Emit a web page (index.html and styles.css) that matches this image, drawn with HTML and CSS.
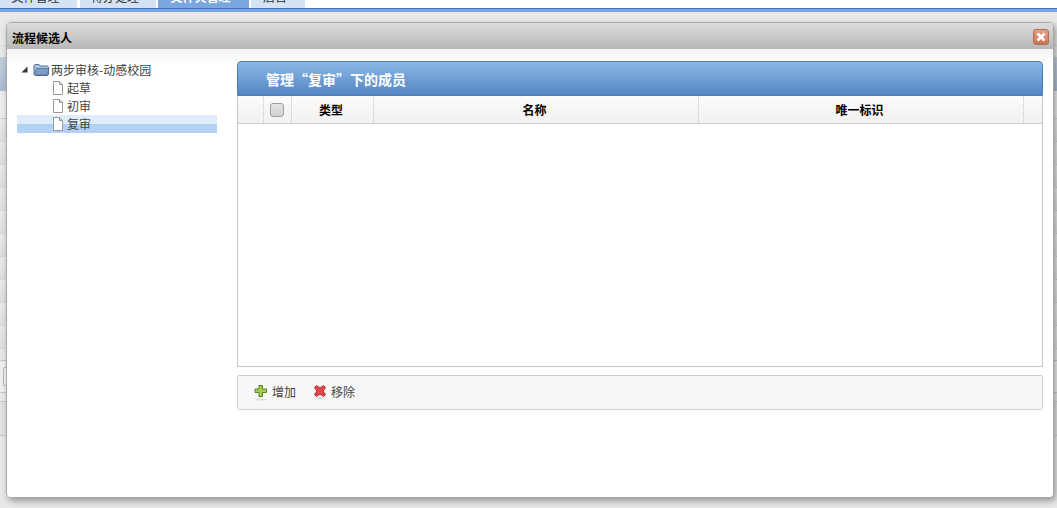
FILE: index.html
```html
<!DOCTYPE html>
<html lang="zh-CN">
<head>
    <meta charset="UTF-8">
    <title>流程候选人</title>
    <link rel="stylesheet" href="styles.css">
</head>
<body>
    <!-- page behind the dialog -->
    <div class="tabs">
        <div class="tab tab-1">文件管理</div>
        <div class="tab tab-2">待办处理</div>
        <div class="tab tab-3">文件夹管理</div>
        <div class="tab tab-4">后台</div>
    </div>
    <div class="tabs-line"></div>
    <div class="back">
        <div class="back-head"></div>
        <div class="back-blue"></div>
        <div class="back-first"></div>
        <div class="back-row"></div>
        <div class="back-row"></div>
        <div class="back-row"></div>
        <div class="back-row"></div>
        <div class="back-row"></div>
        <div class="back-row"></div>
        <div class="back-row"></div>
        <div class="back-row"></div>
        <div class="back-row"></div>
        <div class="back-row"></div>
        <div class="back-last"></div>
        <div class="back-pager"><span class="back-box"></span></div>
        <div class="back-gap"></div>
        <div class="back-foot"></div>
    </div>

    <!-- dialog -->
    <div class="dialog">
        <div class="dialog-title">
            <span>流程候选人</span>
            <span class="close">
                <svg width="10" height="10" viewBox="0 0 10 10"><path d="M1.5 1.5L8.5 8.5M8.5 1.5L1.5 8.5" stroke="#fff" stroke-width="2.6"/></svg>
            </span>
        </div>
        <div class="dialog-body">
            <div class="tree">
                <div class="tree-row tree-root">
                    <svg class="arrow" width="7" height="7" viewBox="0 0 7 7"><path d="M6.5 0.5V6.5H0.5Z" fill="#333"/></svg>
                    <svg class="folder" width="17" height="13" viewBox="0 0 17 13">
                        <path d="M1 11V3C1 2 1.6 1.5 2.5 1.5H6L7.5 3H14C15 3 15.5 3.6 15.5 4.5V11C15.5 11.8 15 12.5 14 12.5H2.5C1.6 12.5 1 11.8 1 11Z" fill="#a9c3e0" stroke="#4d6f96"/>
                        <path d="M1.5 11.5L3.5 5.5H16L14 12H2.5Z" fill="#7c9dc6" stroke="#4d6f96" stroke-width="0.8"/>
                    </svg>
                    <span>两步审核-动感校园</span>
                </div>
                <div class="tree-row tree-leaf">
                    <svg class="page" width="12" height="14" viewBox="0 0 12 14"><path d="M1.5 0.5H7.5L10.5 3.5V13.5H1.5Z M7.5 0.5V3.5H10.5" fill="#fff" stroke="#999"/></svg>
                    <span>起草</span>
                </div>
                <div class="tree-row tree-leaf">
                    <svg class="page" width="12" height="14" viewBox="0 0 12 14"><path d="M1.5 0.5H7.5L10.5 3.5V13.5H1.5Z M7.5 0.5V3.5H10.5" fill="#fff" stroke="#999"/></svg>
                    <span>初审</span>
                </div>
                <div class="tree-row tree-leaf selected">
                    <svg class="page" width="12" height="14" viewBox="0 0 12 14"><path d="M1.5 0.5H7.5L10.5 3.5V13.5H1.5Z M7.5 0.5V3.5H10.5" fill="#fff" stroke="#999"/></svg>
                    <span>复审</span>
                </div>
            </div>

            <div class="panel">
                <div class="panel-head">管理“复审”下的成员</div>
                <div class="grid">
                    <div class="grid-head">
                        <div class="cell"></div>
                        <div class="cell"><span class="check"></span></div>
                        <div class="cell cell-text">类型</div>
                        <div class="cell cell-text">名称</div>
                        <div class="cell cell-text">唯一标识</div>
                        <div class="cell cell-last"></div>
                    </div>
                </div>
                <div class="toolbar">
                    <div class="tool">
                        <svg width="14" height="17" viewBox="0 0 14 17">
                            <ellipse cx="7" cy="15.5" rx="6" ry="1" fill="#ddd"/>
                            <path d="M5 1.5H8.5V5H12.5V8.5H8.5V12.5H5V8.5H1V5H5Z" fill="#a5cc4f" stroke="#57812a"/>
                        </svg>
                        <span>增加</span>
                    </div>
                    <div class="tool">
                        <svg width="14" height="17" viewBox="0 0 14 17">
                            <ellipse cx="7" cy="14.5" rx="5" ry="1" fill="#ddd"/>
                            <path d="M1.5 3.5L3.5 1.5L7 4L10.5 1.5L12.5 3.5L10 7L12.5 10.5L10.5 12.5L7 10L3.5 12.5L1.5 10.5L4 7Z" fill="#e2474b" stroke="#a32a2e"/>
                        </svg>
                        <span>移除</span>
                    </div>
                </div>
            </div>
        </div>
    </div>
</body>
</html>
```

FILE: styles.css
```css
* {
    box-sizing: border-box;
}
html, body {
    height: 100%;
}
body {
    margin: 0;
    overflow: hidden;
    background-color: #e8e8e8;
    font-family: "Noto Sans CJK SC", "Liberation Sans", sans-serif;
    font-size: 12px;
}

/* tabs cut off by the top of the window */
.tabs {
    display: flex;
    align-items: flex-end;
    height: 8px;
    overflow: hidden;
    background-color: #fff;
}
.tab {
    flex: none;
    height: 24px;
    margin-right: 3px;
    padding-right: 6px;
    background-color: #d3e3f5;
    color: #333;
    line-height: 26px;
    text-align: center;
}
.tab-1 {
    width: 77px;
}
.tab-2 {
    width: 76px;
    margin-right: 2px;
}
.tab-3 {
    width: 91px;
    margin-right: 2px;
    background-color: #7ba6e0;
    color: #fff;
    font-weight: bold;
}
.tab-4 {
    width: 54px;
}
.tabs-line {
    height: 4px;
    border-top: 1px solid #3f77c4;
    background-color: #79a6e3;
}

.back-head {
    height: 34px;
    border-bottom: 1px solid #d8d8d8;
}
.back-blue {
    height: 34px;
    margin-top: 11px;
    background: linear-gradient(#c3cfdc, #a9bbd0);
}
.back-first {
    height: 28px;
    border-bottom: 1px solid #cfcfcf;
    background-color: #ececec;
}
.back-row {
    height: 23px;
    border-bottom: 1px dotted #c8c8c8;
    background: linear-gradient(#e9e9e9, #dedede);
}
.back-last {
    height: 11px;
    background-color: #e6e6e6;
}
.back-pager {
    height: 33px;
    padding-top: 6px;
    border-top: 1px solid #c8c8c8;
    border-bottom: 1px solid #c8c8c8;
    background-color: #eeeeee;
}
.back-box {
    display: block;
    width: 14px;
    height: 19px;
    margin-left: 3px;
    border: 1px solid #b5b5b5;
    border-radius: 2px;
    background-color: #f5f5f5;
}
.back-gap {
    height: 9px;
    border-bottom: 1px solid #c8c8c8;
}
.back-foot {
    height: 34px;
    border-bottom: 1px solid #c8c8c8;
    background-color: #e2e2e2;
}

/* dialog sits over the page */
.dialog {
    position: absolute;
    left: 6px;
    top: 22px;
    width: 1048px;
    height: 476px;
    display: flex;
    flex-direction: column;
    border: 1px solid #a9a9a9;
    border-radius: 5px;
    background-color: #fff;
    box-shadow: 2px 3px 6px rgba(0, 0, 0, 0.35);
    overflow: hidden;
}
.dialog-title {
    flex: none;
    display: flex;
    align-items: center;
    justify-content: space-between;
    height: 26px;
    padding: 2px 4px 0 5px;
    background: linear-gradient(#dddddd, #b7b7b7);
    color: #000;
    font-weight: bold;
}
.close {
    display: flex;
    align-items: center;
    justify-content: center;
    width: 16px;
    height: 16px;
    border: 1px solid #b0704f;
    border-radius: 3px;
    background: linear-gradient(#e3a084, #cf7554);
}
.dialog-body {
    flex: 1;
    display: flex;
    padding: 12px 10px 0 10px;
    background: linear-gradient(#f4f4f4, #fff 16px);
}

.tree {
    flex: none;
    width: 200px;
    margin-right: 20px;
    color: #444;
}
.tree-row {
    display: flex;
    align-items: center;
    height: 18px;
}
.tree-root {
    padding-left: 4px;
    margin-top: -1px;
    margin-bottom: 1px;
}
.arrow {
    margin-right: 5px;
}
.folder {
    margin-right: 1px;
}
.tree-leaf {
    padding-left: 35px;
}
.tree-leaf span {
    margin-top: -2px;
}
.page {
    margin-right: 3px;
}
.selected {
    background: linear-gradient(#dfecfb 50%, #b3d0f5 50%);
}

.panel {
    flex: none;
    width: 806px;
}
.panel-head {
    height: 35px;
    padding: 3px 0 0 28px;
    border: 1px solid #4a7ebb;
    border-radius: 4px 4px 0 0;
    background: linear-gradient(#8ab9e5, #5585c2);
    color: #fff;
    font-size: 14px;
    font-weight: bold;
    line-height: 28px;
}
.grid {
    height: 271px;
    border: 1px solid #c6c6c6;
    border-top: 0;
    background-color: #fff;
}
.grid-head {
    display: grid;
    grid-template-columns: 26px 28px 82px 325px 325px 1fr;
    height: 28px;
    border-bottom: 1px solid #d0d0d0;
    background: linear-gradient(#fbfbfb, #f1f1f1);
}
.cell {
    display: flex;
    align-items: center;
    justify-content: center;
    border-right: 1px dotted #c4c4c4;
    color: #000;
    font-weight: bold;
}
.cell-text {
    padding-right: 3px;
}
.cell-last {
    border-right: 0;
}
.check {
    width: 14px;
    height: 14px;
    margin-right: 2px;
    border: 1px solid #a0a0a0;
    border-radius: 3px;
    background: linear-gradient(#e6e6e6, #cfcfcf);
}

.toolbar {
    display: flex;
    align-items: center;
    gap: 17px;
    height: 35px;
    margin-top: 8px;
    padding-left: 16px;
    border: 1px solid #cfcfcf;
    border-radius: 2px;
    background-color: #f7f7f7;
    color: #444;
}
.tool {
    display: flex;
    align-items: center;
    gap: 4px;
}
.tool span {
    margin-top: -2px;
}
```
